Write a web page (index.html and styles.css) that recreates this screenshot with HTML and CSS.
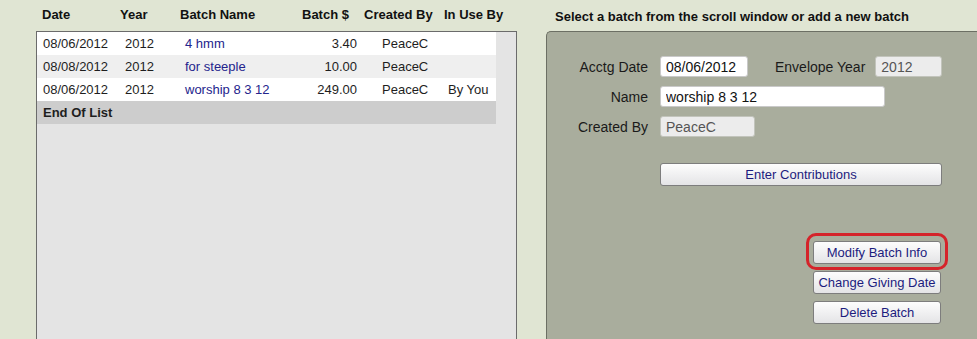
FILE: index.html
```html
<!DOCTYPE html>
<html lang="en">
<head>
    <meta charset="UTF-8">
    <title>Batches</title>
    <link rel="stylesheet" href="styles.css">
</head>
<body>
    <div class="page">
        <div class="list-column">
            <div class="list-header">
                <span>Date</span>
                <span>Year</span>
                <span>Batch Name</span>
                <span>Batch $</span>
                <span>Created By</span>
                <span>In Use By</span>
            </div>
            <div class="list-box">
                <div class="batch-row">
                    <span>08/06/2012</span>
                    <span>2012</span>
                    <span class="batch-name">4 hmm</span>
                    <span class="amount">3.40</span>
                    <span class="creator">PeaceC</span>
                    <span></span>
                </div>
                <div class="batch-row alt">
                    <span>08/08/2012</span>
                    <span>2012</span>
                    <span class="batch-name">for steeple</span>
                    <span class="amount">10.00</span>
                    <span class="creator">PeaceC</span>
                    <span></span>
                </div>
                <div class="batch-row">
                    <span>08/06/2012</span>
                    <span>2012</span>
                    <span class="batch-name">worship 8 3 12</span>
                    <span class="amount">249.00</span>
                    <span class="creator">PeaceC</span>
                    <span>By You</span>
                </div>
                <div class="batch-row end-row">End Of List</div>
            </div>
        </div>

        <div class="detail-column">
            <div class="detail-title">Select a batch from the scroll window or add a new batch</div>
            <div class="detail-panel">
                <div class="batch-form">
                    <label>Acctg Date</label>
                    <div class="field-line">
                        <input class="field date-field" type="text" value="08/06/2012">
                        <label class="inline-label">Envelope Year</label>
                        <input class="field year-field" type="text" value="2012" disabled>
                    </div>

                    <label>Name</label>
                    <div class="field-line">
                        <input class="field name-field" type="text" value="worship 8 3 12">
                    </div>

                    <label>Created By</label>
                    <div class="field-line">
                        <input class="field creator-field" type="text" value="PeaceC" disabled>
                    </div>

                    <div></div>
                    <div class="actions">
                        <button class="btn wide-btn">Enter Contributions</button>
                        <div class="side-actions">
                            <span class="highlight"><button class="btn side-btn">Modify Batch Info</button></span>
                            <button class="btn side-btn">Change Giving Date</button>
                            <button class="btn side-btn">Delete Batch</button>
                        </div>
                    </div>
                </div>
            </div>
        </div>
    </div>
</body>
</html>
```

FILE: styles.css
```css
:root {
    --page-bg: #e0e5d3;
    --panel-bg: #a9ad9d;
    --panel-border: #6c6f64;
    --list-bg: #e4e4e4;
    --row-alt: #efefef;
    --row-end: #cdcdcd;
    --link-blue: #24248c;
    --button-blue: #1c1c7e;
    --text: #1e1e1e;
}

* {
    margin: 0;
    padding: 0;
    box-sizing: border-box;
}

html, body {
    height: 100%;
    overflow: hidden;
}

body {
    background: var(--page-bg);
    font-family: "Liberation Sans", Arial, sans-serif;
    font-size: 13px;
    color: var(--text);
}

.page {
    display: flex;
    gap: 29px;
    height: 339px;
}

/* left: batch list */

.list-column {
    width: 517px;
    padding-left: 36px;
    flex-shrink: 0;
    display: flex;
    flex-direction: column;
}

.list-header {
    display: grid;
    grid-template-columns: 78px 60px 122px 62px 80px auto;
    padding-left: 6px;
    height: 31px;
    line-height: 30px;
    font-weight: bold;
    color: #111;
}

.list-box {
    flex: 1;
    background: var(--list-bg);
    border: 1px solid #6b6b6b;
    border-bottom: none;
}

.batch-row {
    display: grid;
    grid-template-columns: 82px 60px 115px 57px 91px auto;
    width: 459px;
    height: 23px;
    line-height: 23px;
    padding-left: 6px;
    background: #fff;
}

.batch-row.alt {
    background: var(--row-alt);
}

.batch-row.end-row {
    display: block;
    background: var(--row-end);
    font-weight: bold;
}

.batch-name {
    color: var(--link-blue);
}

.amount {
    text-align: right;
}

.creator {
    padding-left: 25px;
}

/* right: batch detail */

.detail-column {
    width: 431px;
    flex-shrink: 0;
    display: flex;
    flex-direction: column;
}

.detail-title {
    height: 31px;
    padding: 3px 0 0 9px;
    line-height: 28px;
    font-weight: bold;
    color: #111;
    white-space: nowrap;
}

.detail-panel {
    flex: 1;
    background: var(--panel-bg);
    border: 1px solid var(--panel-border);
    border-right: none;
    border-bottom: none;
    border-top-left-radius: 5px;
    padding-top: 24px;
}

.batch-form {
    display: grid;
    grid-template-columns: 101px 282px;
    column-gap: 12px;
    row-gap: 9px;
    align-items: center;
}

.batch-form label {
    font-size: 14px;
    text-align: right;
    color: #1a1a1a;
    white-space: nowrap;
}

.field-line {
    display: flex;
    align-items: center;
}

.batch-form .inline-label {
    flex-shrink: 0;
    margin: 0 10px 0 27px;
}

.field {
    flex-shrink: 0;
    height: 21px;
    padding: 0 5px;
    border: 1px solid #c9c9c9;
    border-radius: 3px;
    background: #fff;
    font-family: inherit;
    font-size: 14px;
    color: #111;
}

.field:disabled {
    background: #ececec;
    border-color: #c2c4bc;
    color: #555;
}

.date-field { width: 88px; }
.year-field { width: 67px; }
.name-field { width: 225px; }
.creator-field { width: 95px; }

.actions {
    padding-top: 17px;
}

.btn {
    height: 23px;
    border: 1px solid #7d7d7d;
    border-radius: 3px;
    background: linear-gradient(#fdfdfd, #e4e4e6);
    font-family: inherit;
    font-size: 13px;
    color: var(--button-blue);
    cursor: pointer;
}

.wide-btn {
    width: 282px;
}

.side-actions {
    display: flex;
    flex-direction: column;
    align-items: flex-end;
    gap: 7px;
    margin-top: 55px;
    padding-right: 1px;
}

.side-btn {
    width: 128px;
}

.highlight {
    position: relative;
    display: block;
}

.highlight .btn {
    display: block;
}

.highlight::after {
    content: "";
    position: absolute;
    top: -8px;
    bottom: -6px;
    left: -7px;
    right: -7px;
    border: 3px solid #d5232a;
    border-radius: 10px;
    pointer-events: none;
}
```
